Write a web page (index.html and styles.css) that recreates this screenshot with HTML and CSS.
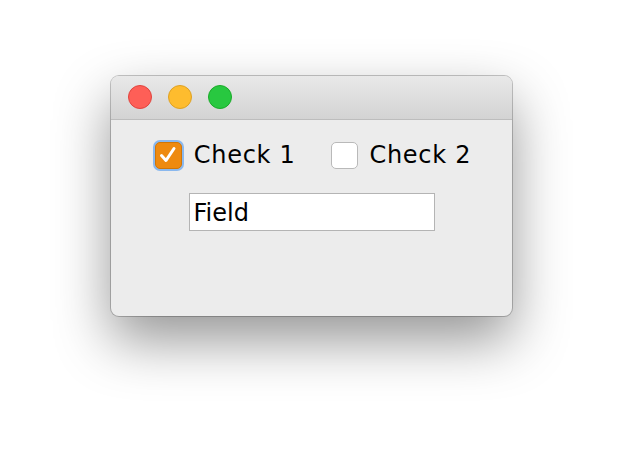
FILE: index.html
```html
<!DOCTYPE html>
<html lang="en">

<head>
  <meta charset="UTF-8">
  <title>Check Demo</title>
  <link rel="stylesheet" href="styles.css">
</head>

<body>
  <div class="window">
    <header class="titlebar">
      <span class="light light-close"></span>
      <span class="light light-min"></span>
      <span class="light light-max"></span>
    </header>

    <main class="content">
      <div class="checks">
        <label class="check">
          <span class="box checked">
            <svg viewBox="0 0 26 26" width="26" height="26">
              <path d="M6.5 13.5 L11 18.5 L19 6.5" fill="none" stroke="#fff" stroke-width="3" stroke-linecap="round" stroke-linejoin="round" />
            </svg>
          </span>
          <span class="check-text">Check 1</span>
        </label>
        <label class="check">
          <span class="box"></span>
          <span class="check-text">Check 2</span>
        </label>
      </div>

      <div class="field">Field</div>
    </main>
  </div>
</body>

</html>
```

FILE: styles.css
```css
html {
  box-sizing: border-box;
  font-family: 'DejaVu Sans', 'Liberation Sans', sans-serif;
}

*,
*::after,
*::before {
  box-sizing: inherit;
}

body {
  margin: 0;
  padding: 76px 0 0 111px;
  height: 464px;
  background-color: #fff;
}

.window {
  width: 401px;
  height: 240px;
  border-radius: 8px;
  overflow: hidden;
  background-color: #ececec;
  box-shadow: 0 0 0 1px rgba(0, 0, 0, .22), 0 24px 55px rgba(0, 0, 0, .42);
}

.titlebar {
  display: flex;
  align-items: center;
  gap: 16px;
  height: 44px;
  padding: 0 0 1px 17px;
  background: linear-gradient(#e9e9e9, #d3d3d3);
  border-bottom: 1px solid #bdbdbd;
}

.light {
  width: 24px;
  height: 24px;
  border-radius: 50%;
}

.light-close {
  background-color: #fe5f57;
  border: 1px solid #e0443e;
}

.light-min {
  background-color: #febc2e;
  border: 1px solid #dea123;
}

.light-max {
  background-color: #28c840;
  border: 1px solid #1aab29;
}

.content {
  display: flex;
  flex-direction: column;
  align-items: center;
  padding-top: 21px;
  padding-left: 3px;
}

.checks {
  display: flex;
  align-items: center;
  gap: 35px;
}

.check {
  display: flex;
  align-items: center;
  gap: 12px;
  font-size: 24px;
  letter-spacing: .7px;
  color: #000;
}

.box {
  display: block;
  width: 27px;
  height: 27px;
  border-radius: 5px;
  background-color: #fff;
  border: 1px solid #b9b9b9;
}

.box.checked {
  background-color: #ee8a10;
  border: 1px solid #d07608;
  box-shadow: 0 0 0 2px #8ab8ee;
}

.box svg {
  display: block;
  margin: -1px;
}

.field {
  margin-top: 24px;
  margin-left: -3px;
  width: 246px;
  height: 38px;
  padding: 5px 4px 0;
  font-size: 24px;
  letter-spacing: 0;
  color: #000;
  background-color: #fff;
  border: 1px solid #b4b4b4;
}
```
